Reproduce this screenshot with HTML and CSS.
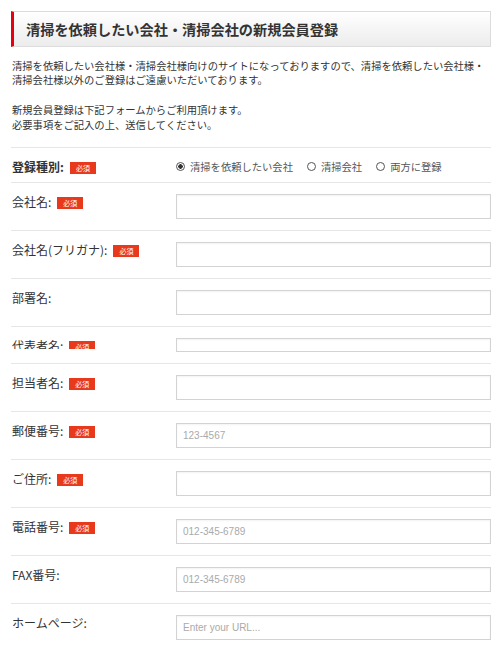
FILE: index.html
```html
<!DOCTYPE html>
<html lang="ja">
<head>
    <meta charset="UTF-8">
    <meta name="viewport" content="width=device-width, initial-scale=1.0">
    <title>新規会員登録</title>
    <link rel="stylesheet" href="styles.css">
</head>
<body>

    <div class="page">
        <h1 class="page-title">清掃を依頼したい会社・清掃会社の新規会員登録</h1>

        <p class="intro">清掃を依頼したい会社様・清掃会社様向けのサイトになっておりますので、清掃を依頼したい会社様・<br>清掃会社様以外のご登録はご遠慮いただいております。</p>
        <p class="intro">新規会員登録は下記フォームからご利用頂けます。<br>必要事項をご記入の上、送信してください。</p>

        <form class="entry-form">
            <div class="row row-type">
                <div class="label label-strong">登録種別:<span class="req">必須</span></div>
                <div class="radios">
                    <label class="radio"><input type="radio" name="type" checked><span>清掃を依頼したい会社</span></label>
                    <label class="radio"><input type="radio" name="type"><span>清掃会社</span></label>
                    <label class="radio"><input type="radio" name="type"><span>両方に登録</span></label>
                </div>
            </div>

            <div class="row">
                <div class="label">会社名:<span class="req">必須</span></div>
                <input class="field" type="text">
            </div>

            <div class="row">
                <div class="label">会社名(フリガナ):<span class="req">必須</span></div>
                <input class="field" type="text">
            </div>

            <div class="row">
                <div class="label">部署名:</div>
                <input class="field" type="text">
            </div>

            <div class="row row-cut">
                <div class="label">代表者名:<span class="req">必須</span></div>
                <input class="field" type="text">
            </div>

            <div class="row">
                <div class="label">担当者名:<span class="req">必須</span></div>
                <input class="field" type="text">
            </div>

            <div class="row">
                <div class="label">郵便番号:<span class="req">必須</span></div>
                <input class="field" type="text" placeholder="123-4567">
            </div>

            <div class="row">
                <div class="label">ご住所:<span class="req">必須</span></div>
                <input class="field" type="text">
            </div>

            <div class="row">
                <div class="label">電話番号:<span class="req">必須</span></div>
                <input class="field" type="text" placeholder="012-345-6789">
            </div>

            <div class="row">
                <div class="label">FAX番号:</div>
                <input class="field" type="text" placeholder="012-345-6789">
            </div>

            <div class="row">
                <div class="label">ホームページ:</div>
                <input class="field" type="text" placeholder="Enter your URL...">
            </div>
        </form>
    </div>

</body>
</html>
```

FILE: styles.css
```css
body {
    margin: 0;
    background: #fff;
    color: #333;
    font-family: "Noto Sans CJK JP", "Noto Sans", sans-serif;
}

.page {
    width: 480px;
    margin: 11px 0 0 11px;
}

.page-title {
    margin: 0;
    padding: 7px 10px 7px 12px;
    border: 1px solid #dcdcdc;
    border-left: 3px solid #e50012; /* red accent bar */
    background: linear-gradient(to bottom, #ffffff, #ececec);
    font-size: 14.2px;
    line-height: 20px;
    font-weight: bold;
    color: #333;
}

.intro {
    margin: 11.5px 0 0 1px;
    font-size: 10.3px;
    line-height: 14.8px;
    color: #333;
}

.intro + .intro {
    margin-top: 14.8px;
}

.entry-form {
    margin-top: 14.5px;
    border-top: 1px solid #e6e6e6;
}

.row {
    display: grid;
    grid-template-columns: 165px 1fr;
    align-items: start;
    padding: 11px 0;
    border-bottom: 1px solid #e6e6e6;
}

.row-type {
    padding: 11px 0 7px;
}

.label {
    display: flex;
    align-items: flex-start;
    gap: 6px;
    height: 16px;
    padding-left: 1px;
    font-size: 12px;
    line-height: 16px;
    color: #333;
    white-space: nowrap;
}

.label-strong {
    font-weight: bold;
}

.req {
    display: inline-block;
    width: 26px;
    height: 12px;
    margin-top: 3px;
    background: #e8391d;
    color: #fff;
    font-size: 7px;
    font-weight: normal;
    line-height: 12px;
    text-align: center;
}

.field {
    box-sizing: border-box;
    width: 100%;
    height: 25px;
    margin: 0;
    padding: 0 6px;
    border: 1px solid #d3d3d3;
    box-shadow: inset 0 1px 2px rgba(0, 0, 0, 0.05);
    background: #fff;
    font-family: "Liberation Sans", Arial, sans-serif;
    font-size: 10px;
    color: #333;
    outline: none;
}

.field::placeholder {
    color: #aaa;
}

/* the representative row is squeezed in the original */
.row-cut .label {
    height: 11px;
    overflow: hidden;
}

.row-cut .field {
    height: 14px;
}

.radios {
    display: flex;
    align-items: center;
    gap: 14px;
    height: 16px;
}

.radio {
    display: flex;
    align-items: center;
    gap: 5px;
    font-size: 10.3px;
    line-height: 16px;
    color: #555;
}

.radio input {
    appearance: none;
    box-sizing: border-box;
    width: 9px;
    height: 9px;
    margin: 0;
    border: 1px solid #555;
    border-radius: 50%;
    background: #fff;
}

.radio input:checked {
    background: radial-gradient(circle, #333 0 2px, #fff 2.5px);
}
```
